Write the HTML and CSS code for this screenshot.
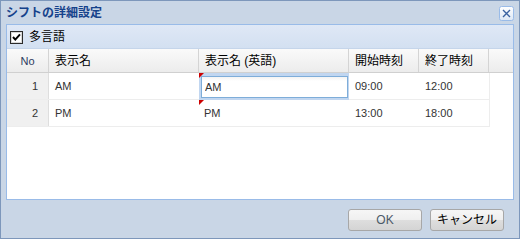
FILE: index.html
```html
<!DOCTYPE html>
<html lang="ja">
<head>
    <meta charset="UTF-8">
    <title>シフトの詳細設定</title>
    <link rel="stylesheet" href="styles.css">
</head>
<body>
    <div class="window">
        <div class="title-bar">
            <span class="title">シフトの詳細設定</span>
            <span class="close-btn">
                <svg width="15" height="15" viewBox="0 0 15 15">
                    <defs>
                        <linearGradient id="cg" x1="0" y1="0" x2="0" y2="1">
                            <stop offset="0" stop-color="#ffffff"/>
                            <stop offset="1" stop-color="#dce7f5"/>
                        </linearGradient>
                    </defs>
                    <rect x="0.5" y="0.5" width="14" height="14" rx="2" fill="url(#cg)" stroke="#99bbe8"/>
                    <path d="M4 4 L11 11 M11 4 L4 11" stroke="#3a62a0" stroke-width="1.4"/>
                </svg>
            </span>
        </div>
        <div class="panel">
            <div class="toolbar">
                <label class="check">
                    <span class="check-box">
                        <svg width="13" height="13" viewBox="0 0 13 13">
                            <rect x="0.5" y="0.5" width="12" height="12" fill="#ffffff" stroke="#2b2b2b"/>
                            <rect x="1.5" y="1.5" width="10" height="10" fill="none" stroke="#d8d8d8"/>
                            <path d="M3 6 L5.3 8.6 L10 3.4" fill="none" stroke="#000000" stroke-width="2"/>
                        </svg>
                    </span>
                    多言語
                </label>
            </div>
            <!-- グリッドヘッダー -->
            <div class="grid-head">
                <div class="hd hd-num">No</div>
                <div class="hd col-name">表示名</div>
                <div class="hd col-name">表示名 (英語)</div>
                <div class="hd col-time">開始時刻</div>
                <div class="hd col-time">終了時刻</div>
                <div class="hd hd-fill"></div>
            </div>
            <!-- グリッド本体 -->
            <div class="grid-body">
                <div class="row">
                    <div class="cell cell-num">1</div>
                    <div class="cell col-name">AM</div>
                    <div class="cell col-name cell-edit">
                        <span class="dirty"></span>
                        <input type="text" class="editor" value="AM">
                    </div>
                    <div class="cell col-time">09:00</div>
                    <div class="cell col-time">12:00</div>
                </div>
                <div class="row">
                    <div class="cell cell-num">2</div>
                    <div class="cell col-name">PM</div>
                    <div class="cell col-name cell-dirty">
                        <span class="dirty"></span>
                        PM
                    </div>
                    <div class="cell col-time">13:00</div>
                    <div class="cell col-time">18:00</div>
                </div>
            </div>
        </div>
        <div class="footer">
            <button class="btn btn-ok">OK</button>
            <button class="btn">キャンセル</button>
        </div>
    </div>
</body>
</html>
```

FILE: styles.css
```css
* {
    box-sizing: border-box;
}
body {
    margin: 0;
    padding: 0;
    background-color: #ffffff;
    font-family: 'Liberation Sans', 'Noto Sans CJK JP', sans-serif;
}
.window {
    width: 520px;
    height: 239px;
    border: 1px solid #7d97bb;
    background-color: #c9d6e6;
    display: flex;
    flex-direction: column;
    padding: 0 5px;
}
/* タイトルバー */
.title-bar {
    height: 23px;
    display: flex;
    align-items: center;
    justify-content: space-between;
    padding-left: 0;
}
.title {
    font-size: 12px;
    font-weight: bold;
    color: #15428b;
    line-height: 14px;
}
.close-btn {
    display: flex;
    width: 15px;
    height: 15px;
    margin-top: 1px;
}
/* パネル */
.panel {
    height: 176px;
    border: 1px solid #99bbe8;
    background-color: #ffffff;
    display: flex;
    flex-direction: column;
}
.toolbar {
    height: 24px;
    background: linear-gradient(#dfe8f6, #d3e0f1);
    border-bottom: 1px solid #c5d5ea;
    display: flex;
    align-items: center;
    padding-left: 3px;
}
.check {
    display: flex;
    align-items: center;
    font-size: 12px;
    color: #000000;
    line-height: 14px;
}
.check-box {
    display: flex;
    width: 13px;
    height: 13px;
    margin-right: 6px;
    margin-top: 1px;
}
/* グリッドヘッダー */
.grid-head {
    display: flex;
    height: 24px;
    border-bottom: 1px solid #d0d0d0;
    background: linear-gradient(#fafafa, #ececec);
}
.hd {
    border-right: 1px solid #d4d4d4;
    font-size: 12px;
    color: #000000;
    display: flex;
    align-items: center;
    padding-left: 6px;
    line-height: 14px;
}
.hd-num {
    width: 42px;
    padding-left: 0;
    justify-content: center;
    font-size: 11px;
    color: #2c3a60;
}
.hd-fill {
    flex: 1;
    border-right: none;
}
.col-name {
    width: 150px;
}
.col-time {
    width: 70px;
}
/* グリッド本体 */
.grid-body {
    flex: 1;
}
.row {
    display: flex;
    width: 483px;
    height: 27px;
    border-bottom: 1px solid #ededed;
    border-right: 1px solid #ededed;
}
.cell {
    font-size: 11px;
    color: #333333;
    display: flex;
    align-items: center;
    padding-left: 6px;
    position: relative;
}
.cell-num {
    width: 42px;
    background-color: #f0f0f0;
    border-right: 1px solid #dedede;
    justify-content: flex-end;
    padding-left: 0;
    padding-right: 10px;
}
.cell-dirty {
    padding-left: 5px;
}
.cell-edit {
    padding: 2px 1px 2px 2px;
    margin-bottom: -1px;
    height: 27px;
    background-color: #c1d6f0;
    z-index: 1;
}
.editor {
    width: 100%;
    height: 22px;
    margin: 0;
    border: 1px solid #7eadd9;
    background: linear-gradient(#f3f3f3, #ffffff 4px);
    font-family: 'Liberation Sans', 'Noto Sans CJK JP', sans-serif;
    font-size: 11px;
    color: #333333;
    padding: 0 3px;
    outline: none;
}
.dirty {
    position: absolute;
    top: 0;
    left: 0;
    width: 0;
    height: 0;
    border-top: 5px solid #cc0000;
    border-right: 5px solid transparent;
    z-index: 2;
}
/* フッター */
.footer {
    flex: 1;
    display: flex;
    justify-content: flex-end;
    align-items: flex-start;
    padding-top: 9px;
    padding-right: 10px;
    gap: 8px;
}
.btn {
    width: 74px;
    height: 22px;
    margin: 0;
    border: 1px solid #a7a7a7;
    border-radius: 3px;
    background: linear-gradient(#f6f6f6 0, #efefef 50%, #dedede 50%, #d4d4d4 100%);
    font-family: 'Liberation Sans', 'Noto Sans CJK JP', sans-serif;
    font-size: 12px;
    color: #000000;
    padding: 0;
    line-height: 14px;
}
.btn-ok {
    color: #4b5968;
}
```
